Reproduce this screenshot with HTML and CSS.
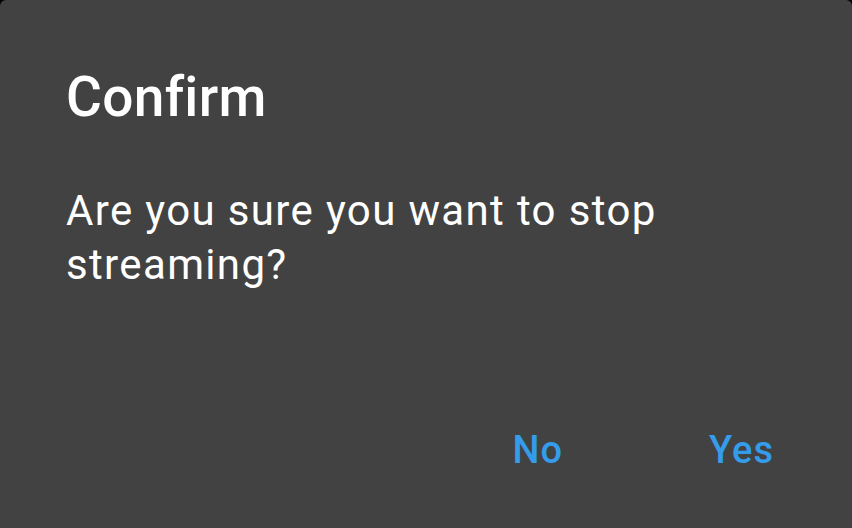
FILE: index.html
```html
<!DOCTYPE html>
<html lang="en">
<head>
  <meta charset="UTF-8">
  <meta name="viewport" content="width=device-width, initial-scale=1.0">
  <title>Confirm</title>
  <link rel="stylesheet" href="styles.css">
</head>
<body>
  <div class="dialog">
    <h1 class="dialog-title">Confirm</h1>
    <p class="dialog-message">Are you sure you want to stop streaming?</p>
    <div class="dialog-actions">
      <button class="dialog-btn">No</button>
      <button class="dialog-btn">Yes</button>
    </div>
  </div>
</body>
</html>
```

FILE: styles.css
```css
/* General Styles */
html, body {
  margin: 0;
  padding: 0;
  height: 100%;
  background: #000;
}

body {
  font-family: Roboto, "Noto Sans", sans-serif;
}

/* Dialog */
.dialog {
  box-sizing: border-box;
  height: 100%;
  display: flex;
  flex-direction: column;
  padding: 0 64px 0 66px;
  background: #424242;
  border-radius: 6px 6px 0 0;
  color: #fff;
}

.dialog-title {
  margin: 67px 0 0;
  font-size: 55px;
  font-weight: 500;
  line-height: 60px;
  letter-spacing: 0.3px;
}

.dialog-message {
  margin: 57px 0 0;
  font-size: 42px;
  font-weight: 400;
  line-height: 54px;
  letter-spacing: 1.35px;
  max-width: 640px;
}

.dialog-actions {
  margin-top: auto;
  margin-right: -64px;
  display: flex;
  justify-content: flex-end;
  gap: 146px;
  padding: 0 78px 58px 0;
}

.dialog-btn {
  padding: 0;
  border: none;
  background: none;
  font-family: inherit;
  font-size: 38px;
  font-weight: 500;
  line-height: 40px;
  letter-spacing: 1px;
  color: #349cea;
  cursor: pointer;
}
```
